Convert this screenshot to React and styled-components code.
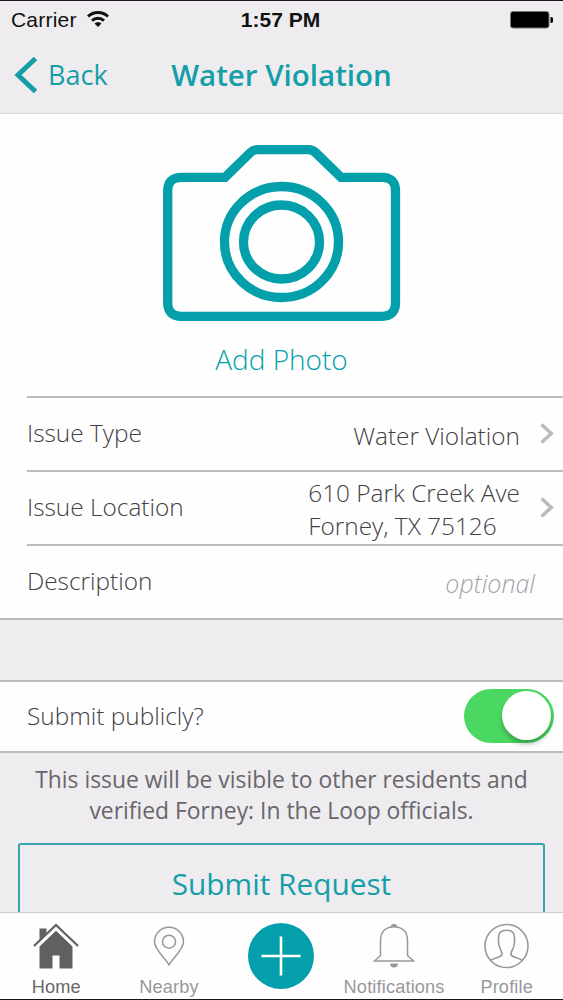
import React from 'react'
import styled, { createGlobalStyle } from 'styled-components'

const teal = '#03a0ac'

const GlobalStyle = createGlobalStyle`
  * {
    box-sizing: border-box;
  }
  body {
    margin: 0;
    background: #efedf0;
  }
`

const Screen = styled.div`
  width: 563px;
  height: 1000px;
  display: flex;
  flex-direction: column;
  overflow: hidden;
  background: #eeecef;
  border-top: 1px solid #1c151d;
  border-bottom: 1px solid #1c151d;
  font-family: 'Open Sans', sans-serif;
  color: #434146;

  svg {
    display: block;
    flex: none;
  }
`

const Header = styled.header`
  flex: none;
  height: 113px;
  border-bottom: 1px solid #d9d8da;
`

const StatusBar = styled.div`
  display: grid;
  grid-template-columns: 1fr auto 1fr;
  align-items: center;
  height: 37px;
  padding: 0 10px 0 11px;
  font-family: 'Liberation Sans', sans-serif;
  font-size: 21px;
  color: #111;
`

const Carrier = styled.div`
  display: flex;
  align-items: center;
  gap: 10px;
  letter-spacing: 0.2px;
`

const Clock = styled.div`
  padding-right: 3px;
  font-weight: 700;
`

const Battery = styled.div`
  justify-self: end;
`

const NavBar = styled.div`
  display: grid;
  grid-template-columns: 1fr auto 1fr;
  align-items: center;
  height: 73px;
  padding: 0 14px;
  color: #149ea8;
`

const Back = styled.div`
  display: flex;
  align-items: center;
  gap: 10px;
  font-size: 27px;
  line-height: 36px;
`

const Title = styled.h1`
  margin: 0;
  font-size: 29.5px;
  line-height: 36px;
  font-weight: 600;
`

const Photo = styled.div`
  flex: none;
  display: flex;
  flex-direction: column;
  align-items: center;
  height: 282px;
  padding-top: 31px;
  background: #fefefe;
`

const PhotoLabel = styled.div`
  margin-top: 19px;
  font-size: 28px;
  line-height: 38px;
  font-weight: 300;
  color: ${teal};
`

const List = styled.div`
  flex: none;
  padding-left: 27px;
  background: #fefefe;
  border-bottom: 2px solid #bdbbbe;
`

const Row = styled.div`
  display: flex;
  align-items: center;
  justify-content: space-between;
  height: 74px;
  padding-right: ${props => props.$end || 9}px;
  border-top: 2px solid #bdbbbe;
  font-size: 24.4px;
  font-weight: 300;
`

const Label = styled.span`
  padding-bottom: 2px;
  line-height: 34px;
`

const Value = styled.div`
  display: flex;
  align-items: center;
  gap: 20px;
  line-height: 33px;

  span {
    padding-top: 2px;
  }

  svg {
    margin-bottom: 1px;
  }
`

const Optional = styled.span`
  padding-top: 1px;
  font-size: 25px;
  font-style: italic;
  color: #a5a3a7;
`

const Public = styled.div`
  flex: none;
  display: flex;
  align-items: center;
  justify-content: space-between;
  height: 73px;
  margin-top: 60px;
  padding: 0 9px 0 27px;
  background: #fefefe;
  border-top: 2px solid #bdbbbe;
  border-bottom: 2px solid #bdbbbe;
  font-size: 24.4px;
  font-weight: 300;
`

const Toggle = styled.div`
  display: flex;
  justify-content: flex-end;
  width: 90px;
  height: 54px;
  margin-bottom: 2px;
  padding: 2px 3px;
  border-radius: 28px;
  background: #4bd862;
`

const Knob = styled.div`
  width: 49px;
  height: 49px;
  border-radius: 50%;
  background: #fff;
  box-shadow: 0 4px 5px rgba(0, 0, 0, 0.25);
`

const Note = styled.p`
  flex: none;
  margin: 11px 0 0;
  font-size: 22.85px;
  line-height: 31px;
  text-align: center;
  color: #68666b;
`

const Submit = styled.div`
  flex: 1;
  min-height: 0;
  margin: 17px 18px 0;
  padding-top: 19px;
  border: 2px solid #38a4ac;
  border-bottom: 0;
  border-radius: 3px 3px 0 0;
  overflow: hidden;
  font-size: 29.8px;
  line-height: 40px;
  text-align: center;
  color: #149ea8;
`

const TabBar = styled.nav`
  flex: none;
  display: grid;
  grid-template-columns: repeat(5, 1fr);
  height: 87px;
  background: #fefefe;
  border-top: 1px solid #cfcdd0;
`

const Tab = styled.div`
  display: flex;
  flex-direction: column;
  align-items: center;
  justify-content: space-between;
  padding: 10px 0 2px;
  font-family: 'Liberation Sans', sans-serif;
  font-size: 18.2px;
  line-height: 20px;
  letter-spacing: 0.15px;
  color: ${props => (props.$active ? '#68666a' : '#99979b')};
`

const AddButton = styled.div`
  display: flex;
  align-items: center;
  justify-content: center;
  width: 66px;
  height: 66px;
  border-radius: 50%;
  background: ${teal};
`

const Chevron = () => (
  <svg width="14" height="21" viewBox="0 0 14 21" fill="none" stroke="#bcbabd" strokeWidth="3.5">
    <path d="M1.5 1.5L11.3 10.5L1.5 19.5" />
  </svg>
)

const HomeIcon = () => (
  <svg width="46" height="48" viewBox="0 0 46 48" fill="#625f63">
    <path d="M23 7.5L39.5 23v22.500H26.500V32.500h-7V45.500H6.500V23z" />
    <path d="M1 23L23 2L45 23" fill="none" stroke="#fefefe" strokeWidth="8" />
    <path d="M6.500 5.500h7v5.500l-7 6.500z" />
    <path d="M1 23L23 2L45 23" fill="none" stroke="#625f63" strokeWidth="2.200" />
  </svg>
)

const PinIcon = () => (
  <svg width="32" height="48" viewBox="0 0 32 48" fill="none" stroke="#99979b" strokeWidth="1.500">
    <path d="M16 42C13 35.500 1.500 27 1.500 18.800a14.500 14.500 0 0 1 29 0C30.500 27 19 35.500 16 42z" />
    <circle cx="16" cy="18.700" r="6.500" />
  </svg>
)

const BellIcon = () => (
  <svg width="42" height="48" viewBox="0 0 42 48" fill="none" stroke="#99979b" strokeWidth="1.500">
    <path d="M18.300 3.500a2.800 2.800 0 0 1 5.400 0z" fill="#99979b" />
    <path d="M1.500 38L7.500 32.500V17.500C7.500 8 13.500 3.700 21 3.700S34.500 8 34.500 17.500V32.500L40.500 38z" />
    <path d="M17 40.500h8a4 4 0 0 1-8 0z" fill="#99979b" stroke="none" />
  </svg>
)

const ProfileIcon = () => (
  <svg width="46" height="48" viewBox="0 0 46 48" fill="none" stroke="#99979b" strokeWidth="1.600">
    <circle cx="22.500" cy="23" r="21.500" />
    <path d="M6.800 37.300C10 34.500 17.500 34.500 18 31.500C18.500 28 14.500 25.500 14.500 19V14.500C14.500 9.500 17.500 7.200 22.500 7.200S30.500 9.500 30.500 14.500V19C30.500 25.500 26.500 28 27 31.500C27.500 34.500 35 34.500 38.200 37.300" />
  </svg>
)

const rows = [
  { label: 'Issue Type', value: 'Water Violation' },
  { label: 'Issue Location', value: <>610 Park Creek Ave<br />Forney, TX 75126</> },
]

const App = () => (
  <>
    <GlobalStyle />
    <Screen>
      <Header>
        <StatusBar>
          <Carrier>
            Carrier
            <svg width="22" height="17" viewBox="0 0 22 17" fill="none" stroke="#111" strokeWidth="2.900">
              <path d="M1 5.500a14.500 14.500 0 0 1 20 0" />
              <path d="M5 9.600a8.800 8.800 0 0 1 12 0" />
              <path d="M7.500 12.500a4.800 4.800 0 0 1 7 0L11 16z" fill="#111" stroke="none" />
            </svg>
          </Carrier>
          <Clock>1:57 PM</Clock>
          <Battery>
            <svg width="43" height="18" viewBox="0 0 43 18">
              <rect x="0.500" y="0.500" width="38.500" height="16.500" rx="2.500" stroke="#777" />
              <path d="M40.500 6a3 3 0 0 1 0 6z" />
            </svg>
          </Battery>
        </StatusBar>
        <NavBar>
          <Back>
            <svg width="24" height="37" viewBox="0 0 24 37" fill="none" stroke="#149ea8" strokeWidth="5">
              <path d="M21.500 2.500L4 19L21.500 35.500" />
            </svg>
            Back
          </Back>
          <Title>Water Violation</Title>
        </NavBar>
      </Header>
      <Photo>
        <svg width="238" height="176" viewBox="0 0 238 176" fill="none" stroke={teal} strokeWidth="9.300">
          <path d="M18.500 32.300H62L87.500 7.500Q90.500 4.700 94.500 4.700H145.500Q149.500 4.700 152.500 7.500L178 32.300H219Q232.500 32.300 232.500 46V157.500Q232.500 171.300 219 171.300H18.500Q4.700 171.300 4.700 157.500V46Q4.700 32.300 18.500 32.300z" />
          <ellipse cx="118.500" cy="97" rx="57" ry="55.500" />
          <ellipse cx="118.500" cy="97" rx="38" ry="37" />
        </svg>
        <PhotoLabel>Add Photo</PhotoLabel>
      </Photo>
      <List>
        {rows.map(row => (
          <Row key={row.label}>
            <Label>{row.label}</Label>
            <Value>
              <span>{row.value}</span>
              <Chevron />
            </Value>
          </Row>
        ))}
        <Row $end={28}>
          <Label>Description</Label>
          <Optional>optional</Optional>
        </Row>
      </List>
      <Public>
        <Label>Submit publicly?</Label>
        <Toggle>
          <Knob />
        </Toggle>
      </Public>
      <Note>
        This issue will be visible to other residents and
        <br />
        verified Forney: In the Loop officials.
      </Note>
      <Submit>Submit Request</Submit>
      <TabBar>
        <Tab $active>
          <HomeIcon />
          Home
        </Tab>
        <Tab>
          <PinIcon />
          Nearby
        </Tab>
        <Tab>
          <AddButton>
            <svg width="40" height="40" viewBox="0 0 40 40" stroke="#fff" strokeWidth="2.600">
              <path d="M20 0.500V39.500M0.500 20H39.500" />
            </svg>
          </AddButton>
        </Tab>
        <Tab>
          <BellIcon />
          Notifications
        </Tab>
        <Tab>
          <ProfileIcon />
          Profile
        </Tab>
      </TabBar>
    </Screen>
  </>
)

export default App
